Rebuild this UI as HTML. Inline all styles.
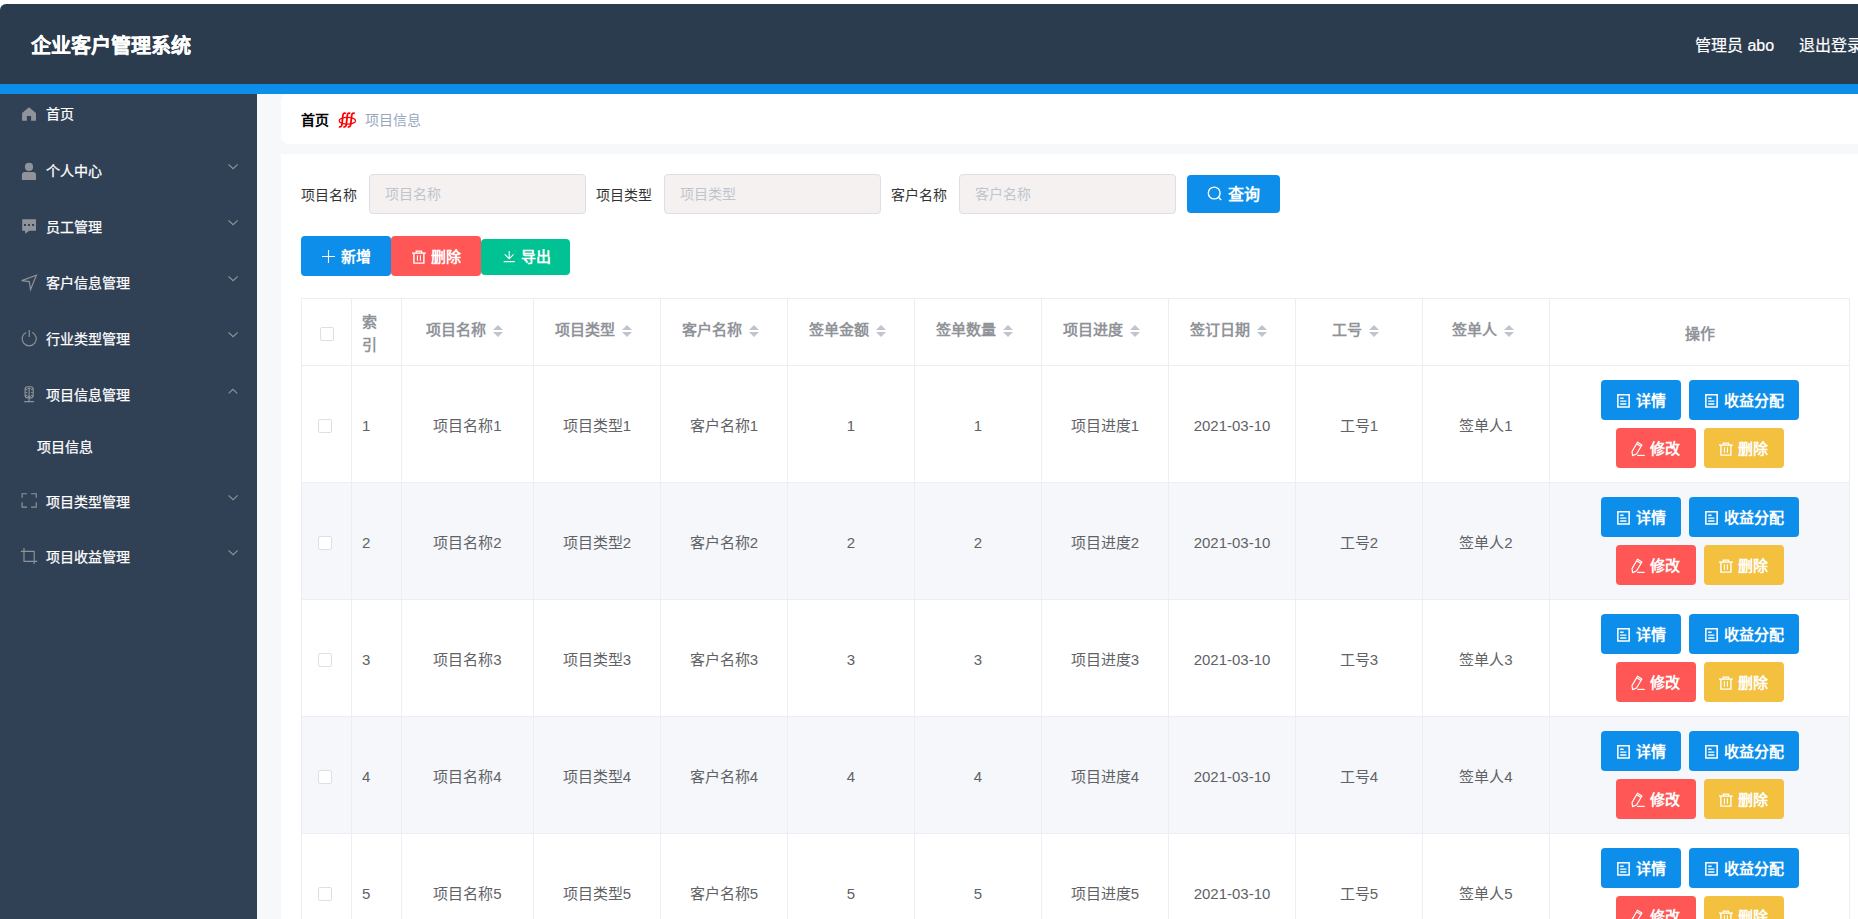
<!DOCTYPE html>
<html lang="zh-CN"><head><meta charset="utf-8"><title>企业客户管理系统</title>
<style>
*{box-sizing:border-box;margin:0;padding:0}
html,body{width:1858px;height:919px;overflow:hidden;background:#fff;font-family:"Liberation Sans",sans-serif;}
.abs{position:absolute}
.hdr{position:absolute;left:0;top:4px;width:1900px;height:80px;background:#2b3c4e;border-top-left-radius:6px}
.title{position:absolute;left:31px;top:28px;font-size:20px;line-height:28px;font-weight:bold;color:#fff;white-space:nowrap;-webkit-text-stroke:0.3px #fff}
.hright{position:absolute;top:28px;font-size:16px;line-height:28px;color:#fff;white-space:nowrap;-webkit-text-stroke:0.2px #fff}
.strip{position:absolute;left:0;top:84px;width:1858px;height:10px;background:#0d8eea}
.side{position:absolute;left:0;top:94px;width:257px;height:825px;background:#304156}
.mi{position:absolute;left:0;width:257px;height:20px;color:#fff;font-size:14px;line-height:20px;font-weight:normal;-webkit-text-stroke:0.25px #fff;white-space:nowrap}
.mi svg.ov{position:absolute;left:0;top:0;width:257px;height:20px;overflow:visible}
.mi .tx{position:absolute;left:46px;top:0}
.mi svg.ch{position:absolute;left:228px;width:11px;height:7px}
.cbg{position:absolute;left:257px;top:94px;width:1601px;height:825px;background:#f7f8fa}
.bc{position:absolute;left:281px;top:94px;width:1600px;height:50px;background:#fff;border-radius:8px}
.bc .t{position:absolute;top:16px;font-size:14px;line-height:20px;white-space:nowrap}
.card{position:absolute;left:281px;top:154px;width:1600px;height:800px;background:#fff}
.lbl{position:absolute;top:185px;font-size:14px;line-height:20px;color:#333;white-space:nowrap}
.inp{position:absolute;top:174px;width:217px;height:40px;background:#f5f1f1;border:1px solid #dcdfe6;border-radius:4px}
.inp span{position:absolute;left:15px;top:9px;font-size:14px;line-height:20px;color:#c0c4cc;white-space:nowrap}
.btn{position:absolute;color:#fff;font-weight:bold;border-radius:4px;white-space:nowrap}
.bt{position:absolute;line-height:20px}
.blue{background:#0d8eea}.red{background:#ff5656}.green{background:#00c292}.yellow{background:#f4c03f}
.tbl{position:absolute;left:301px;top:298px;border-top:1px solid #ebeef5;border-left:1px solid #ebeef5}
.row{display:flex}
.c{border-right:1px solid #ebeef5;border-bottom:1px solid #ebeef5;display:flex;align-items:center;justify-content:center;font-size:15px;color:#606266;white-space:nowrap;position:relative}
.hrow .c{height:67px;color:#909399;font-weight:bold;font-size:15px}
.brow .c{height:117px}
.brow.st .c{background:#f5f7fa}
.w50{width:50px}.w300{width:300px}
.cb{width:14px;height:14px;border:1px solid #dcdfe6;border-radius:2px;background:#fff;position:relative;top:2px}
.brow .cb{left:-2px}
.idx{justify-content:flex-start;padding-left:10px;padding-top:2px;white-space:normal;line-height:23px}
.bidx{justify-content:flex-start;padding-left:10px;padding-top:3px}
.ht{position:relative;top:-2px;padding-right:24px;line-height:20px}
.hop{position:relative;top:2px;line-height:20px}
.bv{line-height:20px;position:relative;top:2px}
.caret{position:absolute;right:7px;top:5px;width:10px;height:12px}
.caret:before{content:"";position:absolute;left:0;top:0;border-left:5px solid transparent;border-right:5px solid transparent;border-bottom:5px solid #c0c4cc}
.caret:after{content:"";position:absolute;left:0;top:7px;border-left:5px solid transparent;border-right:5px solid transparent;border-top:5px solid #c0c4cc}
.ops{position:relative;width:300px;height:88px}
</style></head><body>
<div class="hdr">
  <div class="title">企业客户管理系统</div>
  <div class="hright" style="left:1695px">管理员 abo</div>
  <div class="hright" style="left:1799px">退出登录</div>
</div>
<div class="strip"></div>
<div class="side">
<div class="mi" style="top:10px"><span class="tx">首页</span><svg class="ov" viewBox="0 0 257 20"><path d="M29 3.2 L36 9 V16.8 H31.1 V12.1 H26.9 V16.8 H22.1 V9 Z" fill="#909399"/></svg></div>
<div class="mi" style="top:67px"><span class="tx">个人中心</span><svg class="ov" viewBox="0 0 257 20"><circle cx="29" cy="5.9" r="4.1" fill="#909399"/><path d="M21.9 19 V14 Q21.9 11 24.9 11 H33 Q36 11 36 14 V19 Z" fill="#909399"/><path d="M228.5 3.3 L233.1 7.6 L237.7 3.3" fill="none" stroke="#909399" stroke-width="1.15"/></svg></div>
<div class="mi" style="top:123px"><span class="tx">员工管理</span><svg class="ov" viewBox="0 0 257 20"><path d="M22.2 2.2 H36 V13.7 H29.2 L25.3 16.8 L25 13.7 H22.2 Z" fill="#909399"/><rect x="24" y="7" width="2" height="2" fill="#304156"/><rect x="28" y="7" width="2" height="2" fill="#304156"/><rect x="32.1" y="7" width="2" height="2" fill="#304156"/><path d="M228.5 3.3 L233.1 7.6 L237.7 3.3" fill="none" stroke="#909399" stroke-width="1.15"/></svg></div>
<div class="mi" style="top:179px"><span class="tx">客户信息管理</span><svg class="ov" viewBox="0 0 257 20"><path d="M21.7 7.6 L36.4 2.2 L30.5 16.5 L29.3 8.6 Z" fill="none" stroke="#909399" stroke-width="1.15" stroke-linejoin="miter"/><path d="M228.5 3.3 L233.1 7.6 L237.7 3.3" fill="none" stroke="#909399" stroke-width="1.15"/></svg></div>
<div class="mi" style="top:235px"><span class="tx">行业类型管理</span><svg class="ov" viewBox="0 0 257 20"><path d="M26.1 3.4 A7.1 7.1 0 1 0 32.3 3.4" fill="none" stroke="#909399" stroke-width="1.15"/><path d="M29.2 0.9 V8" fill="none" stroke="#909399" stroke-width="1.15"/><path d="M228.5 3.3 L233.1 7.6 L237.7 3.3" fill="none" stroke="#909399" stroke-width="1.15"/></svg></div>
<div class="mi" style="top:291px"><span class="tx">项目信息管理</span><svg class="ov" viewBox="0 0 257 20"><rect x="25.1" y="1.7" width="8.1" height="11.1" rx="2.6" fill="none" stroke="#909399" stroke-width="1.15"/><path d="M25.5 4.6 H27.2 M31.1 4.6 H32.8 M25.5 7.5 H27.2 M31.1 7.5 H32.8 M25.5 10.4 H27.2 M31.1 10.4 H32.8 M27.6 3.3 H30.6 M29.1 3.3 V11.6 M27.6 11.6 H30.6 M29.1 12.8 V16.4 M24.2 16.6 H34" fill="none" stroke="#909399" stroke-width="1.15"/><path d="M228.7 8.3 L232.9 4.3 L237.2 8.3" fill="none" stroke="#909399" stroke-width="1.15"/></svg></div>
<div class="mi" style="top:343px"><span class="tx" style="left:37px">项目信息</span></div>
<div class="mi" style="top:398px"><span class="tx">项目类型管理</span><svg class="ov" viewBox="0 0 257 20"><path d="M22.1 5.8 V1.7 H27 M31.1 1.7 H36.2 V5.8 M36.2 10.2 V15.1 H31.1 M27 15.1 H22.1 V10.2" fill="none" stroke="#909399" stroke-width="1.15"/><path d="M228.5 3.3 L233.1 7.6 L237.7 3.3" fill="none" stroke="#909399" stroke-width="1.15"/></svg></div>
<div class="mi" style="top:453px"><span class="tx">项目收益管理</span><svg class="ov" viewBox="0 0 257 20"><path d="M24 0.9 V14.4 H37.2 M20.9 4.3 H34.2 V17" fill="none" stroke="#909399" stroke-width="1.15"/><path d="M228.5 3.3 L233.1 7.6 L237.7 3.3" fill="none" stroke="#909399" stroke-width="1.15"/></svg></div>
</div>
<div class="cbg"></div>
<div class="bc">
  <span class="t" style="left:20px;font-weight:bold;color:#000">首页</span>
  <svg class="abs" style="left:53px;top:14px;width:28px;height:24px" viewBox="0 0 28 24"><path d="M12 5.6 C10.5 4.6 9.2 5.2 8.9 7.5 L7.9 16.6 C7.6 18.6 6.5 19.3 5 18.6" fill="none" stroke="#f00" stroke-width="1.8"/><path d="M16.4 5.6 C14.9 4.6 13.6 5.2 13.3 7.5 L12.3 16.6 C12.0 18.6 10.9 19.3 9.4 18.6" fill="none" stroke="#f00" stroke-width="1.8"/><path d="M20.8 5.6 C19.3 4.6 18.0 5.2 17.700000000000003 7.5 L16.700000000000003 16.6 C16.4 18.6 15.3 19.3 13.8 18.6" fill="none" stroke="#f00" stroke-width="1.8"/><ellipse cx="13.4" cy="12.7" rx="8.2" ry="3.4" fill="none" stroke="#f00" stroke-width="1.3"/></svg>
  <span class="t" style="left:84px;color:#97a8be">项目信息</span>
</div>
<div class="card"></div>
<div class="lbl" style="left:301px">项目名称</div>
<div class="inp" style="left:369px"><span>项目名称</span></div>
<div class="lbl" style="left:596px">项目类型</div>
<div class="inp" style="left:664px"><span>项目类型</span></div>
<div class="lbl" style="left:891px">客户名称</div>
<div class="inp" style="left:959px"><span>客户名称</span></div>
<div class="btn blue" style="left:1187px;top:175px;width:93px;height:38px"><svg class="abs" style="left:20px;top:11px;width:16px;height:16px" viewBox="0 0 16 16"><circle cx="7.2" cy="7" r="5.9" fill="none" stroke="#fff" stroke-width="1.4"/><path d="M11.4 11.2 L14.2 14" stroke="#fff" stroke-width="1.4"/></svg><span class="bt" style="left:41px;top:10px;font-size:16px">查询</span></div>
<div class="btn blue" style="left:301px;top:236px;width:90px;height:40px"><svg class="abs" style="left:21px;top:14px;width:13px;height:13px" viewBox="0 0 13 13"><path d="M6.5 0 V13 M0 6.5 H13" stroke="#fff" stroke-width="1.1"/></svg><span class="bt" style="left:40px;top:11px;font-size:15px">新增</span></div>
<div class="btn red" style="left:391px;top:236px;width:90px;height:40px"><svg class="abs" style="left:20px;top:14px;width:16px;height:15px" viewBox="0 0 16 15"><path d="M1 3.1 H14.8" stroke="#fff" stroke-width="1.4"/><path d="M5.2 3 V1.2 H10.6 V3" fill="none" stroke="#fff" stroke-width="1.2"/><path d="M2.9 3.2 V13.1 H12.9 V3.2" fill="none" stroke="#fff" stroke-width="1.4"/><path d="M6.4 5.3 V10.7 M9.4 5.3 V10.7" stroke="#fff" stroke-width="1.1"/></svg><span class="bt" style="left:40px;top:11px;font-size:15px">删除</span></div>
<div class="btn green" style="left:481px;top:239px;width:89px;height:36px"><svg class="abs" style="left:22px;top:12px;width:13px;height:12px" viewBox="0 0 13 12"><path d="M6.2 0 V7.8 M1.7 3.3 L6.2 7.8 L10.6 3.3 M0.7 10.6 H11.7" fill="none" stroke="#fff" stroke-width="1.1"/></svg><span class="bt" style="left:40px;top:8px;font-size:15px">导出</span></div>
<div class="tbl">
<div class="row hrow"><div class="c w50"><div class="cb"></div></div><div class="c w50 idx">索<br>引</div><div class="c" style="width:132px"><span class="ht">项目名称<i class="caret"></i></span></div><div class="c" style="width:127px"><span class="ht">项目类型<i class="caret"></i></span></div><div class="c" style="width:127px"><span class="ht">客户名称<i class="caret"></i></span></div><div class="c" style="width:127px"><span class="ht">签单金额<i class="caret"></i></span></div><div class="c" style="width:127px"><span class="ht">签单数量<i class="caret"></i></span></div><div class="c" style="width:127px"><span class="ht">项目进度<i class="caret"></i></span></div><div class="c" style="width:127px"><span class="ht">签订日期<i class="caret"></i></span></div><div class="c" style="width:127px"><span class="ht">工号<i class="caret"></i></span></div><div class="c" style="width:127px"><span class="ht">签单人<i class="caret"></i></span></div><div class="c w300"><span class="hop">操作</span></div></div>
<div class="row brow"><div class="c w50"><div class="cb"></div></div><div class="c w50 bidx">1</div><div class="c" style="width:132px"><span class="bv">项目名称1</span></div><div class="c" style="width:127px"><span class="bv">项目类型1</span></div><div class="c" style="width:127px"><span class="bv">客户名称1</span></div><div class="c" style="width:127px"><span class="bv">1</span></div><div class="c" style="width:127px"><span class="bv">1</span></div><div class="c" style="width:127px"><span class="bv">项目进度1</span></div><div class="c" style="width:127px"><span class="bv">2021-03-10</span></div><div class="c" style="width:127px"><span class="bv">工号1</span></div><div class="c" style="width:127px"><span class="bv">签单人1</span></div><div class="c w300"><div class="ops"><div class="btn blue" style="left:51px;top:0px;width:80px;height:40px"><svg class="abs" style="left:16px;top:14px;width:13px;height:14px" viewBox="0 0 13 14"><path d="M0.85 0.85 H12.15 V12.95 H0.85 Z" fill="none" stroke="#fff" stroke-width="1.5"/><path d="M3.2 4.2 H6.6 M3.2 7.1 H9.4 M3.2 10 H9.4" stroke="#fff" stroke-width="1.4"/></svg><span class="bt" style="left:35px;top:11px;font-size:15px">详情</span></div><div class="btn blue" style="left:139px;top:0px;width:110px;height:40px"><svg class="abs" style="left:16px;top:14px;width:13px;height:14px" viewBox="0 0 13 14"><path d="M0.85 0.85 H12.15 V12.95 H0.85 Z" fill="none" stroke="#fff" stroke-width="1.5"/><path d="M3.2 4.2 H6.6 M3.2 7.1 H9.4 M3.2 10 H9.4" stroke="#fff" stroke-width="1.4"/></svg><span class="bt" style="left:35px;top:11px;font-size:15px">收益分配</span></div><div class="btn red" style="left:66px;top:48px;width:80px;height:40px"><svg class="abs" style="left:15px;top:13px;width:15px;height:16px" viewBox="0 0 15 16"><path d="M6.5 1.2 L10.9 4 L5.5 13 L1.6 14.6 L1 10.6 Z M5.6 2.8 L10 5.6" fill="none" stroke="#fff" stroke-width="1.2" stroke-linejoin="round"/><path d="M6.2 14.4 H13.7" stroke="#fff" stroke-width="1.2"/></svg><span class="bt" style="left:34px;top:11px;font-size:15px">修改</span></div><div class="btn yellow" style="left:154px;top:48px;width:80px;height:40px"><svg class="abs" style="left:14px;top:14px;width:16px;height:15px" viewBox="0 0 16 15"><path d="M1 3.1 H14.8" stroke="#fff" stroke-width="1.4"/><path d="M5.2 3 V1.2 H10.6 V3" fill="none" stroke="#fff" stroke-width="1.2"/><path d="M2.9 3.2 V13.1 H12.9 V3.2" fill="none" stroke="#fff" stroke-width="1.4"/><path d="M6.4 5.3 V10.7 M9.4 5.3 V10.7" stroke="#fff" stroke-width="1.1"/></svg><span class="bt" style="left:34px;top:11px;font-size:15px">删除</span></div></div></div></div>
<div class="row brow st"><div class="c w50"><div class="cb"></div></div><div class="c w50 bidx">2</div><div class="c" style="width:132px"><span class="bv">项目名称2</span></div><div class="c" style="width:127px"><span class="bv">项目类型2</span></div><div class="c" style="width:127px"><span class="bv">客户名称2</span></div><div class="c" style="width:127px"><span class="bv">2</span></div><div class="c" style="width:127px"><span class="bv">2</span></div><div class="c" style="width:127px"><span class="bv">项目进度2</span></div><div class="c" style="width:127px"><span class="bv">2021-03-10</span></div><div class="c" style="width:127px"><span class="bv">工号2</span></div><div class="c" style="width:127px"><span class="bv">签单人2</span></div><div class="c w300"><div class="ops"><div class="btn blue" style="left:51px;top:0px;width:80px;height:40px"><svg class="abs" style="left:16px;top:14px;width:13px;height:14px" viewBox="0 0 13 14"><path d="M0.85 0.85 H12.15 V12.95 H0.85 Z" fill="none" stroke="#fff" stroke-width="1.5"/><path d="M3.2 4.2 H6.6 M3.2 7.1 H9.4 M3.2 10 H9.4" stroke="#fff" stroke-width="1.4"/></svg><span class="bt" style="left:35px;top:11px;font-size:15px">详情</span></div><div class="btn blue" style="left:139px;top:0px;width:110px;height:40px"><svg class="abs" style="left:16px;top:14px;width:13px;height:14px" viewBox="0 0 13 14"><path d="M0.85 0.85 H12.15 V12.95 H0.85 Z" fill="none" stroke="#fff" stroke-width="1.5"/><path d="M3.2 4.2 H6.6 M3.2 7.1 H9.4 M3.2 10 H9.4" stroke="#fff" stroke-width="1.4"/></svg><span class="bt" style="left:35px;top:11px;font-size:15px">收益分配</span></div><div class="btn red" style="left:66px;top:48px;width:80px;height:40px"><svg class="abs" style="left:15px;top:13px;width:15px;height:16px" viewBox="0 0 15 16"><path d="M6.5 1.2 L10.9 4 L5.5 13 L1.6 14.6 L1 10.6 Z M5.6 2.8 L10 5.6" fill="none" stroke="#fff" stroke-width="1.2" stroke-linejoin="round"/><path d="M6.2 14.4 H13.7" stroke="#fff" stroke-width="1.2"/></svg><span class="bt" style="left:34px;top:11px;font-size:15px">修改</span></div><div class="btn yellow" style="left:154px;top:48px;width:80px;height:40px"><svg class="abs" style="left:14px;top:14px;width:16px;height:15px" viewBox="0 0 16 15"><path d="M1 3.1 H14.8" stroke="#fff" stroke-width="1.4"/><path d="M5.2 3 V1.2 H10.6 V3" fill="none" stroke="#fff" stroke-width="1.2"/><path d="M2.9 3.2 V13.1 H12.9 V3.2" fill="none" stroke="#fff" stroke-width="1.4"/><path d="M6.4 5.3 V10.7 M9.4 5.3 V10.7" stroke="#fff" stroke-width="1.1"/></svg><span class="bt" style="left:34px;top:11px;font-size:15px">删除</span></div></div></div></div>
<div class="row brow"><div class="c w50"><div class="cb"></div></div><div class="c w50 bidx">3</div><div class="c" style="width:132px"><span class="bv">项目名称3</span></div><div class="c" style="width:127px"><span class="bv">项目类型3</span></div><div class="c" style="width:127px"><span class="bv">客户名称3</span></div><div class="c" style="width:127px"><span class="bv">3</span></div><div class="c" style="width:127px"><span class="bv">3</span></div><div class="c" style="width:127px"><span class="bv">项目进度3</span></div><div class="c" style="width:127px"><span class="bv">2021-03-10</span></div><div class="c" style="width:127px"><span class="bv">工号3</span></div><div class="c" style="width:127px"><span class="bv">签单人3</span></div><div class="c w300"><div class="ops"><div class="btn blue" style="left:51px;top:0px;width:80px;height:40px"><svg class="abs" style="left:16px;top:14px;width:13px;height:14px" viewBox="0 0 13 14"><path d="M0.85 0.85 H12.15 V12.95 H0.85 Z" fill="none" stroke="#fff" stroke-width="1.5"/><path d="M3.2 4.2 H6.6 M3.2 7.1 H9.4 M3.2 10 H9.4" stroke="#fff" stroke-width="1.4"/></svg><span class="bt" style="left:35px;top:11px;font-size:15px">详情</span></div><div class="btn blue" style="left:139px;top:0px;width:110px;height:40px"><svg class="abs" style="left:16px;top:14px;width:13px;height:14px" viewBox="0 0 13 14"><path d="M0.85 0.85 H12.15 V12.95 H0.85 Z" fill="none" stroke="#fff" stroke-width="1.5"/><path d="M3.2 4.2 H6.6 M3.2 7.1 H9.4 M3.2 10 H9.4" stroke="#fff" stroke-width="1.4"/></svg><span class="bt" style="left:35px;top:11px;font-size:15px">收益分配</span></div><div class="btn red" style="left:66px;top:48px;width:80px;height:40px"><svg class="abs" style="left:15px;top:13px;width:15px;height:16px" viewBox="0 0 15 16"><path d="M6.5 1.2 L10.9 4 L5.5 13 L1.6 14.6 L1 10.6 Z M5.6 2.8 L10 5.6" fill="none" stroke="#fff" stroke-width="1.2" stroke-linejoin="round"/><path d="M6.2 14.4 H13.7" stroke="#fff" stroke-width="1.2"/></svg><span class="bt" style="left:34px;top:11px;font-size:15px">修改</span></div><div class="btn yellow" style="left:154px;top:48px;width:80px;height:40px"><svg class="abs" style="left:14px;top:14px;width:16px;height:15px" viewBox="0 0 16 15"><path d="M1 3.1 H14.8" stroke="#fff" stroke-width="1.4"/><path d="M5.2 3 V1.2 H10.6 V3" fill="none" stroke="#fff" stroke-width="1.2"/><path d="M2.9 3.2 V13.1 H12.9 V3.2" fill="none" stroke="#fff" stroke-width="1.4"/><path d="M6.4 5.3 V10.7 M9.4 5.3 V10.7" stroke="#fff" stroke-width="1.1"/></svg><span class="bt" style="left:34px;top:11px;font-size:15px">删除</span></div></div></div></div>
<div class="row brow st"><div class="c w50"><div class="cb"></div></div><div class="c w50 bidx">4</div><div class="c" style="width:132px"><span class="bv">项目名称4</span></div><div class="c" style="width:127px"><span class="bv">项目类型4</span></div><div class="c" style="width:127px"><span class="bv">客户名称4</span></div><div class="c" style="width:127px"><span class="bv">4</span></div><div class="c" style="width:127px"><span class="bv">4</span></div><div class="c" style="width:127px"><span class="bv">项目进度4</span></div><div class="c" style="width:127px"><span class="bv">2021-03-10</span></div><div class="c" style="width:127px"><span class="bv">工号4</span></div><div class="c" style="width:127px"><span class="bv">签单人4</span></div><div class="c w300"><div class="ops"><div class="btn blue" style="left:51px;top:0px;width:80px;height:40px"><svg class="abs" style="left:16px;top:14px;width:13px;height:14px" viewBox="0 0 13 14"><path d="M0.85 0.85 H12.15 V12.95 H0.85 Z" fill="none" stroke="#fff" stroke-width="1.5"/><path d="M3.2 4.2 H6.6 M3.2 7.1 H9.4 M3.2 10 H9.4" stroke="#fff" stroke-width="1.4"/></svg><span class="bt" style="left:35px;top:11px;font-size:15px">详情</span></div><div class="btn blue" style="left:139px;top:0px;width:110px;height:40px"><svg class="abs" style="left:16px;top:14px;width:13px;height:14px" viewBox="0 0 13 14"><path d="M0.85 0.85 H12.15 V12.95 H0.85 Z" fill="none" stroke="#fff" stroke-width="1.5"/><path d="M3.2 4.2 H6.6 M3.2 7.1 H9.4 M3.2 10 H9.4" stroke="#fff" stroke-width="1.4"/></svg><span class="bt" style="left:35px;top:11px;font-size:15px">收益分配</span></div><div class="btn red" style="left:66px;top:48px;width:80px;height:40px"><svg class="abs" style="left:15px;top:13px;width:15px;height:16px" viewBox="0 0 15 16"><path d="M6.5 1.2 L10.9 4 L5.5 13 L1.6 14.6 L1 10.6 Z M5.6 2.8 L10 5.6" fill="none" stroke="#fff" stroke-width="1.2" stroke-linejoin="round"/><path d="M6.2 14.4 H13.7" stroke="#fff" stroke-width="1.2"/></svg><span class="bt" style="left:34px;top:11px;font-size:15px">修改</span></div><div class="btn yellow" style="left:154px;top:48px;width:80px;height:40px"><svg class="abs" style="left:14px;top:14px;width:16px;height:15px" viewBox="0 0 16 15"><path d="M1 3.1 H14.8" stroke="#fff" stroke-width="1.4"/><path d="M5.2 3 V1.2 H10.6 V3" fill="none" stroke="#fff" stroke-width="1.2"/><path d="M2.9 3.2 V13.1 H12.9 V3.2" fill="none" stroke="#fff" stroke-width="1.4"/><path d="M6.4 5.3 V10.7 M9.4 5.3 V10.7" stroke="#fff" stroke-width="1.1"/></svg><span class="bt" style="left:34px;top:11px;font-size:15px">删除</span></div></div></div></div>
<div class="row brow"><div class="c w50"><div class="cb"></div></div><div class="c w50 bidx">5</div><div class="c" style="width:132px"><span class="bv">项目名称5</span></div><div class="c" style="width:127px"><span class="bv">项目类型5</span></div><div class="c" style="width:127px"><span class="bv">客户名称5</span></div><div class="c" style="width:127px"><span class="bv">5</span></div><div class="c" style="width:127px"><span class="bv">5</span></div><div class="c" style="width:127px"><span class="bv">项目进度5</span></div><div class="c" style="width:127px"><span class="bv">2021-03-10</span></div><div class="c" style="width:127px"><span class="bv">工号5</span></div><div class="c" style="width:127px"><span class="bv">签单人5</span></div><div class="c w300"><div class="ops"><div class="btn blue" style="left:51px;top:0px;width:80px;height:40px"><svg class="abs" style="left:16px;top:14px;width:13px;height:14px" viewBox="0 0 13 14"><path d="M0.85 0.85 H12.15 V12.95 H0.85 Z" fill="none" stroke="#fff" stroke-width="1.5"/><path d="M3.2 4.2 H6.6 M3.2 7.1 H9.4 M3.2 10 H9.4" stroke="#fff" stroke-width="1.4"/></svg><span class="bt" style="left:35px;top:11px;font-size:15px">详情</span></div><div class="btn blue" style="left:139px;top:0px;width:110px;height:40px"><svg class="abs" style="left:16px;top:14px;width:13px;height:14px" viewBox="0 0 13 14"><path d="M0.85 0.85 H12.15 V12.95 H0.85 Z" fill="none" stroke="#fff" stroke-width="1.5"/><path d="M3.2 4.2 H6.6 M3.2 7.1 H9.4 M3.2 10 H9.4" stroke="#fff" stroke-width="1.4"/></svg><span class="bt" style="left:35px;top:11px;font-size:15px">收益分配</span></div><div class="btn red" style="left:66px;top:48px;width:80px;height:40px"><svg class="abs" style="left:15px;top:13px;width:15px;height:16px" viewBox="0 0 15 16"><path d="M6.5 1.2 L10.9 4 L5.5 13 L1.6 14.6 L1 10.6 Z M5.6 2.8 L10 5.6" fill="none" stroke="#fff" stroke-width="1.2" stroke-linejoin="round"/><path d="M6.2 14.4 H13.7" stroke="#fff" stroke-width="1.2"/></svg><span class="bt" style="left:34px;top:11px;font-size:15px">修改</span></div><div class="btn yellow" style="left:154px;top:48px;width:80px;height:40px"><svg class="abs" style="left:14px;top:14px;width:16px;height:15px" viewBox="0 0 16 15"><path d="M1 3.1 H14.8" stroke="#fff" stroke-width="1.4"/><path d="M5.2 3 V1.2 H10.6 V3" fill="none" stroke="#fff" stroke-width="1.2"/><path d="M2.9 3.2 V13.1 H12.9 V3.2" fill="none" stroke="#fff" stroke-width="1.4"/><path d="M6.4 5.3 V10.7 M9.4 5.3 V10.7" stroke="#fff" stroke-width="1.1"/></svg><span class="bt" style="left:34px;top:11px;font-size:15px">删除</span></div></div></div></div>
</div>
</body></html>
